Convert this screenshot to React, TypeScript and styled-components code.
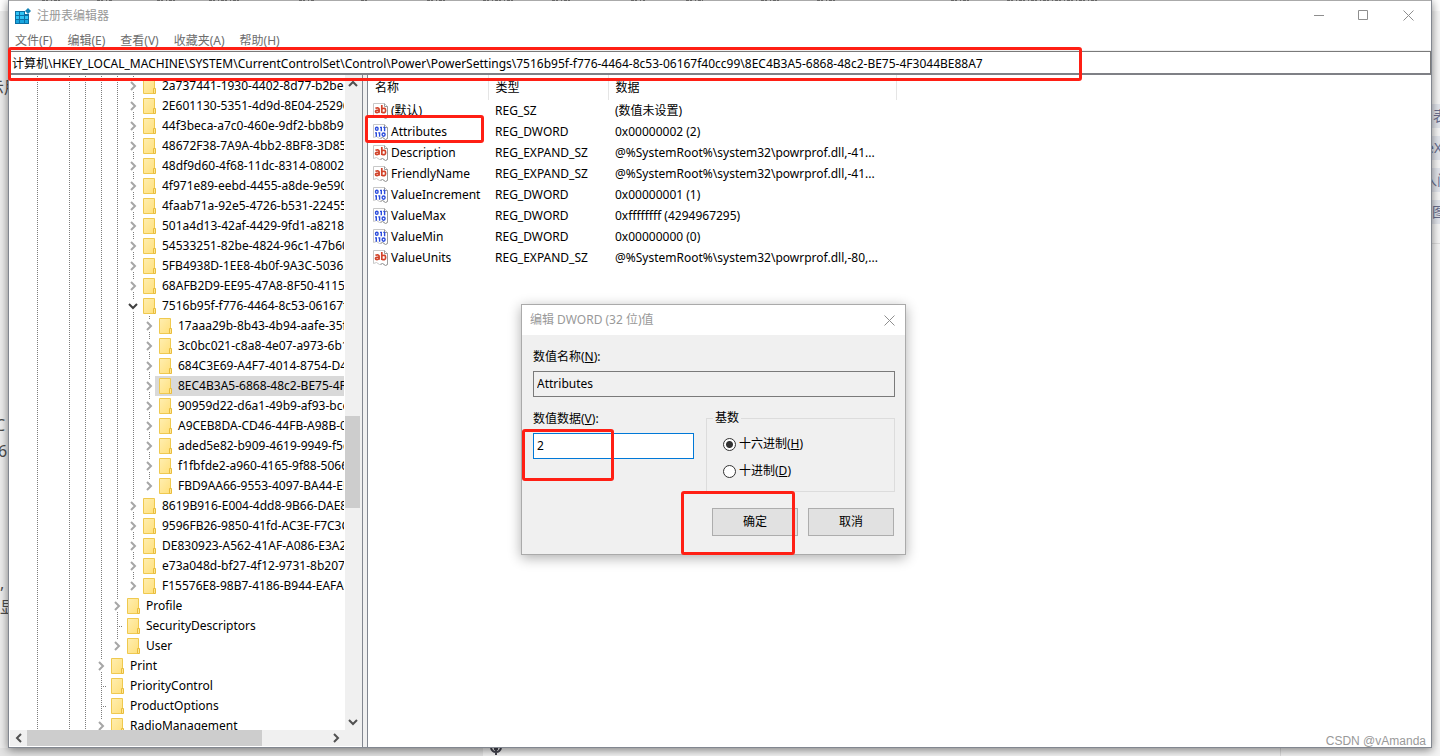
import React from "react";
import styled, { createGlobalStyle, css } from "styled-components";

const RED = "#ff1f14";

const GlobalStyle = createGlobalStyle`
  * { box-sizing: border-box; }
  html, body, #root { height: 100%; }
  body {
    margin: 0;
    overflow: hidden;
    background: #f4f4f4;
    color: #000;
    font: 12px/16px "Noto Sans", "Noto Sans CJK SC", sans-serif;
  }
  button, input { font: inherit; color: inherit; }
  button { padding: 0; border: 0; background: none; }
`;

const Desktop = styled.div`
  display: flex;
  flex-direction: column;
  height: 100vh;
  overflow: hidden;
`;

const Middle = styled.div`
  display: flex;
  flex: 1;
  min-height: 0;
`;

/* Slivers of the web page that show round the registry window */
const Gutter = styled.div<{ $side: "left" | "right" }>`
  display: flex;
  flex-direction: column;
  width: 8px;
  flex: none;
  overflow: hidden;
  white-space: nowrap;
  font-size: 16px;
  line-height: 24px;
  color: #4d4d4d;
  background: ${(p) => (p.$side === "left" ? "#eeeeee" : "#f7f7f7")};
  border-top: 11px solid #ffffff;
`;

const Fragment = styled.span<{ $top: number; $shift?: number }>`
  height: 24px;
  margin-top: ${(p) => p.$top}px;
  text-indent: ${(p) => p.$shift ?? 0}px;
`;

const CatalogItem = styled.span<{ $top: number; $shift: number }>`
  height: 24px;
  margin-top: ${(p) => p.$top}px;
  text-indent: ${(p) => p.$shift}px;
  font-size: 14px;
  color: #6b7090;
  background: #e3e6ed;
`;

const GutterRule = styled.span`
  height: 1px;
  margin-top: 19px;
  background: #e0e0e0;
`;

const BottomStrip = styled.div`
  display: flex;
  height: 8px;
  flex: none;
  background: #f5f5f5;
`;

const StripLeft = styled.div`
  width: 483px;
  background: #e4e4e4;
`;

const StripIcon = styled.svg`
  margin-left: 7px;
`;

const StripRight = styled.div`
  margin-left: auto;
  width: 160px;
  border-left: 1px solid #dddddd;
`;

const Window = styled.main`
  position: relative;
  display: flex;
  flex-direction: column;
  flex: 1;
  min-width: 0;
  background: #fff;
  border: 1px solid #828790;
  border-top: 0;
  box-shadow: 0 2px 9px rgba(0, 0, 0, 0.5);
`;

const TopEdge = styled.svg`
  display: block;
  width: 100%;
  height: 1px;
  flex: none;
  background: #aaa;
`;

const TitleBar = styled.header`
  display: flex;
  align-items: center;
  height: 30px;
  flex: none;
  padding-left: 6px;
  gap: 5px;
  color: #999;
`;

const Title = styled.h1`
  margin: 0;
  flex: 1;
  font-size: 12px;
  font-weight: 400;
`;

const CaptionButtons = styled.div`
  display: flex;
  align-self: flex-start;
`;

const CaptionButton = styled.button`
  display: grid;
  place-items: center;
  width: 45px;
  height: 29px;
`;

const MenuBar = styled.nav`
  display: flex;
  align-items: center;
  height: 19px;
  flex: none;
  padding-left: 6px;
  gap: 15px;
  color: #6d6d6d;
`;

const AddressBar = styled.div`
  position: relative;
  flex: none;
  height: 25px;
  border-top: 1px solid #f0f0f0;
`;

const AddressInput = styled.input`
  display: block;
  width: 100%;
  height: 24px;
  padding: 0 3px;
  border: 1px solid #7a7a7a;
  border-left: 0;
  border-bottom: 2px solid #7f8086;
  background: #fff;
  outline: 0;
`;

/* Hand-drawn style marker frame laid over the control it points out */
const Marker = styled.span<{ $box: string }>`
  position: absolute;
  inset: ${(p) => p.$box};
  border: 3px solid ${RED};
  border-radius: 3px;
  pointer-events: none;
  z-index: 3;
`;

const Panes = styled.div`
  display: flex;
  flex: 1;
  min-height: 0;
`;

const TreePane = styled.section`
  display: flex;
  flex-direction: column;
  width: 354px;
  flex: none;
  padding: 0 0 1px 1px;
  border-right: 1px solid #828790;
`;

const TreeBody = styled.div`
  display: flex;
  flex: 1;
  min-height: 0;
`;

const Tree = styled.ul`
  flex: 1;
  min-width: 0;
  margin: 0 1px 0 0;
  padding: 1px 0 0 17px;
  overflow: hidden;
  list-style: none;
`;

const Node = styled.li`
  display: flex;
  height: 20px;
`;

const dots = (dir: string) =>
  `repeating-linear-gradient(${dir}, #7d7d7d 0 1px, transparent 1px 2px)`;

const Guide = styled.span<{ $on: boolean }>`
  width: 16px;
  flex: none;
  background: ${(p) => (p.$on ? dots("to bottom") : "none")} 10px 0 / 1px 100% no-repeat;
`;

const Joint = styled.span<{ $leaf: boolean; $last: boolean }>`
  display: grid;
  place-items: center;
  width: 16px;
  flex: none;
  padding-left: 3px;
  ${(p) =>
    p.$leaf
      ? css`
          background: ${dots("to bottom")} 10px 0 / 1px 100% no-repeat,
            ${dots("to right")} 10px 10px / 6px 1px no-repeat;
        `
      : css`
          background: ${dots("to bottom")} 10px 0 / 1px 4px no-repeat,
            ${p.$last ? "none" : dots("to bottom")} 10px 16px / 1px 4px no-repeat;
        `}
`;

const NodeLabel = styled.span<{ $selected?: boolean }>`
  display: flex;
  align-items: center;
  flex: 1;
  min-width: 0;
  gap: 6px;
  padding-left: 4px;
  overflow: hidden;
  white-space: nowrap;
  background: ${(p) => (p.$selected ? "#d9d9d9" : "transparent")};
`;

const VScroll = styled.div`
  display: flex;
  flex-direction: column;
  width: 17px;
  flex: none;
  padding-right: 2px;
  background: #f0f0f0;
`;

const HScroll = styled.div`
  display: flex;
  align-items: center;
  height: 16px;
  flex: none;
  padding-right: 18px;
  background: #f0f0f0;
`;

const ScrollButton = styled.button<{ $vertical?: boolean }>`
  display: grid;
  place-items: center;
  width: ${(p) => (p.$vertical ? 15 : 17)}px;
  height: ${(p) => (p.$vertical ? 17 : 15)}px;
  flex: none;
`;

const ScrollTrack = styled.div<{ $vertical?: boolean }>`
  display: flex;
  flex-direction: ${(p) => (p.$vertical ? "column" : "row")};
  flex: 1;
  align-self: stretch;
  min-height: 0;
`;

const Thumb = styled.div<{ $before: number; $size: number; $vertical?: boolean }>`
  flex: none;
  background: #cdcdcd;
  ${(p) =>
    p.$vertical
      ? css`
          height: ${p.$size}px;
          margin-top: ${p.$before}px;
        `
      : css`
          width: ${p.$size}px;
          margin-left: ${p.$before}px;
        `}
`;

const Splitter = styled.div`
  width: 4px;
  flex: none;
  background: #f0f0f0;
`;

const ListPane = styled.section`
  flex: 1;
  min-width: 0;
  border-left: 1px solid #828790;
`;

const ValueTable = styled.table`
  border-collapse: collapse;
  table-layout: fixed;
  width: 528px;
`;

const HeadCell = styled.th<{ $width: number }>`
  width: ${(p) => p.$width}px;
  height: 25px;
  padding: 0 0 0 7px;
  border-right: 1px solid #e5e5e5;
  text-align: left;
  font-weight: 400;
`;

const Cell = styled.td`
  position: relative;
  height: 21px;
  padding: 0 0 0 7px;
  white-space: nowrap;
`;

const ValueName = styled.span`
  display: flex;
  align-items: center;
  gap: 2px;
  margin-left: -2px;
`;

const Watermark = styled.span`
  position: absolute;
  right: 5px;
  bottom: -2px;
  font: 12px/16px "Liberation Sans", Arial, sans-serif;
  color: #999;
`;

const Dialog = styled.form`
  position: absolute;
  left: 512px;
  top: 304px;
  width: 385px;
  height: 251px;
  border: 1px solid #aaa;
  background: #f0f0f0;
  box-shadow: 0 3px 12px rgba(0, 0, 0, 0.32);
`;

const DialogTitle = styled.div`
  display: flex;
  align-items: center;
  justify-content: space-between;
  height: 30px;
  padding-left: 8px;
  background: #fff;
  color: #999;
`;

const DialogClose = styled(CaptionButton)`
  width: 31px;
`;

const DialogBody = styled.div`
  display: grid;
  grid-template-columns: 161px 189px;
  column-gap: 12px;
  padding: 14px 10px 0 11px;
`;

const Field = styled.div<{ $wide?: boolean }>`
  position: relative;
  display: flex;
  flex-direction: column;
  gap: 6px;
  margin-top: ${(p) => (p.$wide ? 0 : 14)}px;
  grid-column: ${(p) => (p.$wide ? "1 / -1" : "auto")};
`;

const TextBox = styled.input<{ $active?: boolean }>`
  width: 100%;
  height: 26px;
  padding: 0 3px 2px;
  outline: 0;
  border: 1px solid ${(p) => (p.$active ? "#0078d7" : "#7a7a7a")};
  background: ${(p) => (p.$active ? "#fff" : "#f0f0f0")};
`;

const Group = styled.fieldset`
  height: 82px;
  margin: 13px 0 0;
  padding: 10px 0 0 16px;
  border: 1px solid #dcdcdc;
`;

const Legend = styled.legend`
  margin-left: -10px;
  padding: 0 2px;
`;

const RadioRow = styled.label`
  display: flex;
  align-items: center;
  gap: 3px;
  height: 16px;
  margin-bottom: 11px;
`;

const Radio = styled.input`
  appearance: none;
  width: 13px;
  height: 13px;
  margin: 0;
  border: 1px solid #333;
  border-radius: 50%;
  background: #fff;
  &:checked { background: radial-gradient(circle, #333 0 3px, #fff 4px); }
`;

const Actions = styled.div`
  display: flex;
  justify-content: flex-end;
  gap: 10px;
  padding: 16px 11px 0 0;
`;

const PushWrap = styled.span`
  position: relative;
`;

const PushButton = styled.button`
  width: 86px;
  height: 28px;
  border: 1px solid #adadad;
  background: #e1e1e1;
`;

const CloseIcon = () => (
  <svg width="11" height="11" viewBox="0 0 11 11" fill="none" stroke="#8e8e8e">
    <path d="M.5.5l10 10M10.5.5l-10 10" />
  </svg>
);

const IconSlot = styled.svg`
  flex: none;
`;

const FolderIcon = () => (
  <IconSlot width="13" height="16" viewBox="0 0 13 16">
    <defs>
      <linearGradient id="folder" x1="0" y1="0" x2="1" y2="1">
        <stop offset="0" stopColor="#ffeeb0" />
        <stop offset="1" stopColor="#ffe07c" />
      </linearGradient>
    </defs>
    <path d="M.5.5h11v15H.5z" fill="url(#folder)" stroke="#efc94f" />
    <path d="M10.5 10.5h2v5h-2z" fill="#ffe693" stroke="#e9bd3c" />
  </IconSlot>
);

const turns = { right: 0, down: 90, left: 180, up: 270 };

const Chevron = ({ to, color = "#505050" }: { to: keyof typeof turns; color?: string }) => (
  <svg width="10" height="10" viewBox="0 0 10 10" fill="none" stroke={color} strokeWidth="2">
    <path d="M3 1l4 4-4 4" transform={`rotate(${turns[to]} 5 5)`} />
  </svg>
);

const AppIcon = () => (
  <svg width="17" height="17" viewBox="0 0 17 17">
    <path d="M0 3h10v3h4v10H0z" fill="#0b6fa4" />
    <g fill="#2fc3f5">
      <path d="M1 4h3v3H1zM5 4h4v3H5zM1 8h3v3H1zM5 8h4v3H5zM10 8h3v3h-3z" />
      <path d="M1 12h3v3H1zM5 12h4v3H5zM10 12h3v3h-3z" fill="#19a5de" />
    </g>
    <path d="M13 0l3 3-3 3-3-3z" fill="#1384b8" />
  </svg>
);

const ValueIcon = ({ kind }: { kind: "text" | "binary" }) => (
  <IconSlot width="16" height="16" viewBox="0 0 16 16" fill="none">
    <path d="M.5.5h11l3 3v11l-2 1-3-2-3 1-3-2-3 1z" fill="#fff" stroke="#c8c8c8" />
    <path d="M11.5.5v3h3v11l-2 1-3-2-2 1" stroke="#9c9c9c" />
    {kind === "text" ? (
      <g stroke="#d1432a" strokeWidth="1.7">
        <path d="M2.4 5.3q3.7-1.2 3.7 1v3.5M6.1 7q-3.6 0-3.6 1.5 0 1.2 1.5 1.2 1.3 0 2.1-1.1" />
        <path d="M8.8 2v8M8.8 6q3.8-2 3.8 1.4 0 3.4-3.8 1.7" />
      </g>
    ) : (
      <g stroke="#2a4bdc" strokeWidth="1.4">
        <ellipse cx="3.8" cy="4.8" rx="1.3" ry="1.6" />
        <path d="M7 3.4h1.3v3.8M10.3 3.4h1.3v3.8" />
        <path d="M2 8.9h1.3v3.8M5.3 8.9h1.3v3.8" />
        <ellipse cx="10.6" cy="10.6" rx="1.5" ry="1.6" />
      </g>
    )}
  </IconSlot>
);

type TreeNode = { name: string; depth: number; open?: boolean; leaf?: boolean; last?: boolean; selected?: boolean };

const nodes: TreeNode[] = [
  ...[
    "2a737441-1930-4402-8d77-b2bebba308a3",
    "2E601130-5351-4d9d-8E04-252966BAD054",
    "44f3beca-a7c0-460e-9df2-bb8b99e0cba6",
    "48672F38-7A9A-4bb2-8BF8-3D85BE19DE4E",
    "48df9d60-4f68-11dc-8314-0800200c9a66",
    "4f971e89-eebd-4455-a8de-9e59040e7347",
    "4faab71a-92e5-4726-b531-224559672d19",
    "501a4d13-42af-4429-9fd1-a8218c268e20",
    "54533251-82be-4824-96c1-47b60b740d00",
    "5FB4938D-1EE8-4b0f-9A3C-5036B0AB995C",
    "68AFB2D9-EE95-47A8-8F50-4115088073B1",
  ].map((name) => ({ name, depth: 6 })),
  { name: "7516b95f-f776-4464-8c53-06167f40cc99", depth: 6, open: true },
  { name: "17aaa29b-8b43-4b94-aafe-35f64daaf1ee", depth: 7 },
  { name: "3c0bc021-c8a8-4e07-a973-6b14cbcb2b7e", depth: 7 },
  { name: "684C3E69-A4F7-4014-8754-D45179A56167", depth: 7 },
  { name: "8EC4B3A5-6868-48c2-BE75-4F3044BE88A7", depth: 7, selected: true },
  { name: "90959d22-d6a1-49b9-af93-bce885ad335b", depth: 7 },
  { name: "A9CEB8DA-CD46-44FB-A98B-02AF69DE4623", depth: 7 },
  { name: "aded5e82-b909-4619-9949-f5d71dac0bcb", depth: 7 },
  { name: "f1fbfde2-a960-4165-9f88-50667911ce96", depth: 7 },
  { name: "FBD9AA66-9553-4097-BA44-ED6E9D65EAB8", depth: 7, last: true },
  { name: "8619B916-E004-4dd8-9B66-DAE86F806698", depth: 6 },
  { name: "9596FB26-9850-41fd-AC3E-F7C3C00AFD4B", depth: 6 },
  { name: "DE830923-A562-41AF-A086-E3A2C6BAD2DA", depth: 6 },
  { name: "e73a048d-bf27-4f12-9731-8b2076e8891f", depth: 6 },
  { name: "F15576E8-98B7-4186-B944-EAFA664402D9", depth: 6, last: true },
  { name: "Profile", depth: 5 },
  { name: "SecurityDescriptors", depth: 5, leaf: true },
  { name: "User", depth: 5, last: true },
  { name: "Print", depth: 4 },
  { name: "PriorityControl", depth: 4, leaf: true },
  { name: "ProductOptions", depth: 4, leaf: true },
  { name: "RadioManagement", depth: 4 },
];

const values: { name: string; type: string; data: string }[] = [
  { name: "(默认)", type: "REG_SZ", data: "(数值未设置)" },
  { name: "Attributes", type: "REG_DWORD", data: "0x00000002 (2)" },
  { name: "Description", type: "REG_EXPAND_SZ", data: "@%SystemRoot%\\system32\\powrprof.dll,-41..." },
  { name: "FriendlyName", type: "REG_EXPAND_SZ", data: "@%SystemRoot%\\system32\\powrprof.dll,-41..." },
  { name: "ValueIncrement", type: "REG_DWORD", data: "0x00000001 (1)" },
  { name: "ValueMax", type: "REG_DWORD", data: "0xffffffff (4294967295)" },
  { name: "ValueMin", type: "REG_DWORD", data: "0x00000000 (0)" },
  { name: "ValueUnits", type: "REG_EXPAND_SZ", data: "@%SystemRoot%\\system32\\powrprof.dll,-80,..." },
];

const menus = ["文件(F)", "编辑(E)", "查看(V)", "收藏夹(A)", "帮助(H)"];

const EditDialog = () => (
  <Dialog aria-label="编辑 DWORD (32 位)值">
    <DialogTitle>
      编辑 DWORD (32 位)值
      <DialogClose type="button" aria-label="关闭">
        <CloseIcon />
      </DialogClose>
    </DialogTitle>
    <DialogBody>
      <Field $wide>
        <label htmlFor="value-name">
          数值名称(<u>N</u>):
        </label>
        <TextBox id="value-name" defaultValue="Attributes" readOnly />
      </Field>
      <Field>
        <label htmlFor="value-data">
          数值数据(<u>V</u>):
        </label>
        <TextBox id="value-data" defaultValue="2" $active />
        <Marker $box="18px 80px 11px -11px" />
      </Field>
      <Group>
        <Legend>基数</Legend>
        <RadioRow>
          <Radio type="radio" name="base" defaultChecked />
          <span>
            十六进制(<u>H</u>)
          </span>
        </RadioRow>
        <RadioRow>
          <Radio type="radio" name="base" />
          <span>
            十进制(<u>D</u>)
          </span>
        </RadioRow>
      </Group>
    </DialogBody>
    <Actions>
      <PushWrap>
        <PushButton type="button">确定</PushButton>
        <Marker $box="-17px 3px -19px -31px" />
      </PushWrap>
      <PushButton type="button">取消</PushButton>
    </Actions>
  </Dialog>
);

export default function App() {
  return (
    <Desktop>
      <GlobalStyle />
      <Middle>
        <Gutter $side="left">
          <Fragment $top={64} $shift={-12}>示用</Fragment>
          <Fragment $top={314} $shift={-5}>C</Fragment>
          <Fragment $top={2} $shift={-2}>6</Fragment>
          <Fragment $top={108}>,</Fragment>
          <Fragment $top={0}>显</Fragment>
        </Gutter>
        <Window>
          <TopEdge aria-hidden="true">
            <path
              d="M33 .5H53M88 .5H104M148 .5H168M200 .5H230M290 .5H306M352 .5H358M418 .5H438M474 .5H506M543 .5H563M622 .5H636M677 .5H694M752 .5H770M808 .5H828M942 .5H960M998 .5H1088"
              stroke="#666"
              strokeDasharray="3 1 2 3 1 2"
            />
          </TopEdge>
          <TitleBar>
            <AppIcon />
            <Title>注册表编辑器</Title>
            <CaptionButtons>
              <CaptionButton aria-label="最小化">
                <svg width="10" height="11" stroke="#8e8e8e">
                  <path d="M0 5.5h10" />
                </svg>
              </CaptionButton>
              <CaptionButton aria-label="最大化">
                <svg width="11" height="11" fill="none" stroke="#8e8e8e">
                  <path d="M.5.5h9v9h-9z" />
                </svg>
              </CaptionButton>
              <CaptionButton aria-label="关闭">
                <CloseIcon />
              </CaptionButton>
            </CaptionButtons>
          </TitleBar>
          <MenuBar>
            {menus.map((m) => (
              <button key={m}>{m}</button>
            ))}
          </MenuBar>
          <AddressBar>
            <AddressInput
              aria-label="地址"
              defaultValue="计算机\HKEY_LOCAL_MACHINE\SYSTEM\CurrentControlSet\Control\Power\PowerSettings\7516b95f-f776-4464-8c53-06167f40cc99\8EC4B3A5-6868-48c2-BE75-4F3044BE88A7"
            />
            <Marker $box="-4px 349px -6px -1px" />
          </AddressBar>
          <Panes>
            <TreePane>
              <TreeBody>
                <Tree>
                  {nodes.map((n) => (
                    <Node key={n.name}>
                      {Array.from({ length: n.depth }, (_, i) => (
                        <Guide key={i} $on={i !== 1} />
                      ))}
                      <Joint $leaf={!!n.leaf} $last={!!n.last}>
                        {!n.leaf && <Chevron to={n.open ? "down" : "right"} color={n.open ? "#404040" : "#a6a6a6"} />}
                      </Joint>
                      <NodeLabel $selected={n.selected}>
                        <FolderIcon />
                        {n.name}
                      </NodeLabel>
                    </Node>
                  ))}
                </Tree>
                <VScroll>
                  <ScrollButton $vertical aria-label="向上">
                    <Chevron to="up" />
                  </ScrollButton>
                  <ScrollTrack $vertical>
                    <Thumb $vertical $before={324} $size={92} />
                  </ScrollTrack>
                  <ScrollButton $vertical aria-label="向下">
                    <Chevron to="down" />
                  </ScrollButton>
                </VScroll>
              </TreeBody>
              <HScroll>
                <ScrollButton aria-label="向左">
                  <Chevron to="left" />
                </ScrollButton>
                <ScrollTrack>
                  <Thumb $before={0} $size={235} />
                </ScrollTrack>
                <ScrollButton aria-label="向右">
                  <Chevron to="right" />
                </ScrollButton>
              </HScroll>
            </TreePane>
            <Splitter />
            <ListPane>
              <ValueTable>
                <thead>
                  <tr>
                    <HeadCell $width={120}>名称</HeadCell>
                    <HeadCell $width={120}>类型</HeadCell>
                    <HeadCell $width={288}>数据</HeadCell>
                  </tr>
                </thead>
                <tbody>
                  {values.map((v) => (
                    <tr key={v.name}>
                      <Cell>
                        <ValueName>
                          <ValueIcon kind={v.type === "REG_DWORD" ? "binary" : "text"} />
                          {v.name}
                        </ValueName>
                        {v.name === "Attributes" && <Marker $box="-6px 4px -1px -3px" />}
                      </Cell>
                      <Cell>{v.type}</Cell>
                      <Cell>{v.data}</Cell>
                    </tr>
                  ))}
                </tbody>
              </ValueTable>
            </ListPane>
          </Panes>
          <EditDialog />
          <Watermark>CSDN @vAmanda</Watermark>
        </Window>
        <Gutter $side="right">
          <CatalogItem $top={93} $shift={1}>表</CatalogItem>
          <CatalogItem $top={8} $shift={-6}>eX</CatalogItem>
          <CatalogItem $top={8} $shift={-9}>入门</CatalogItem>
          <CatalogItem $top={8} $shift={0}>图</CatalogItem>
          <GutterRule />
        </Gutter>
      </Middle>
      <BottomStrip>
        <StripLeft />
        <StripIcon width="12" height="8" viewBox="0 0 12 8" fill="none" stroke="#44444f" strokeWidth="2" aria-hidden="true">
          <path d="M1 0q1 4 5 4t5-4M6 0v7M4 1h4" />
        </StripIcon>
        <StripRight />
      </BottomStrip>
    </Desktop>
  );
}
